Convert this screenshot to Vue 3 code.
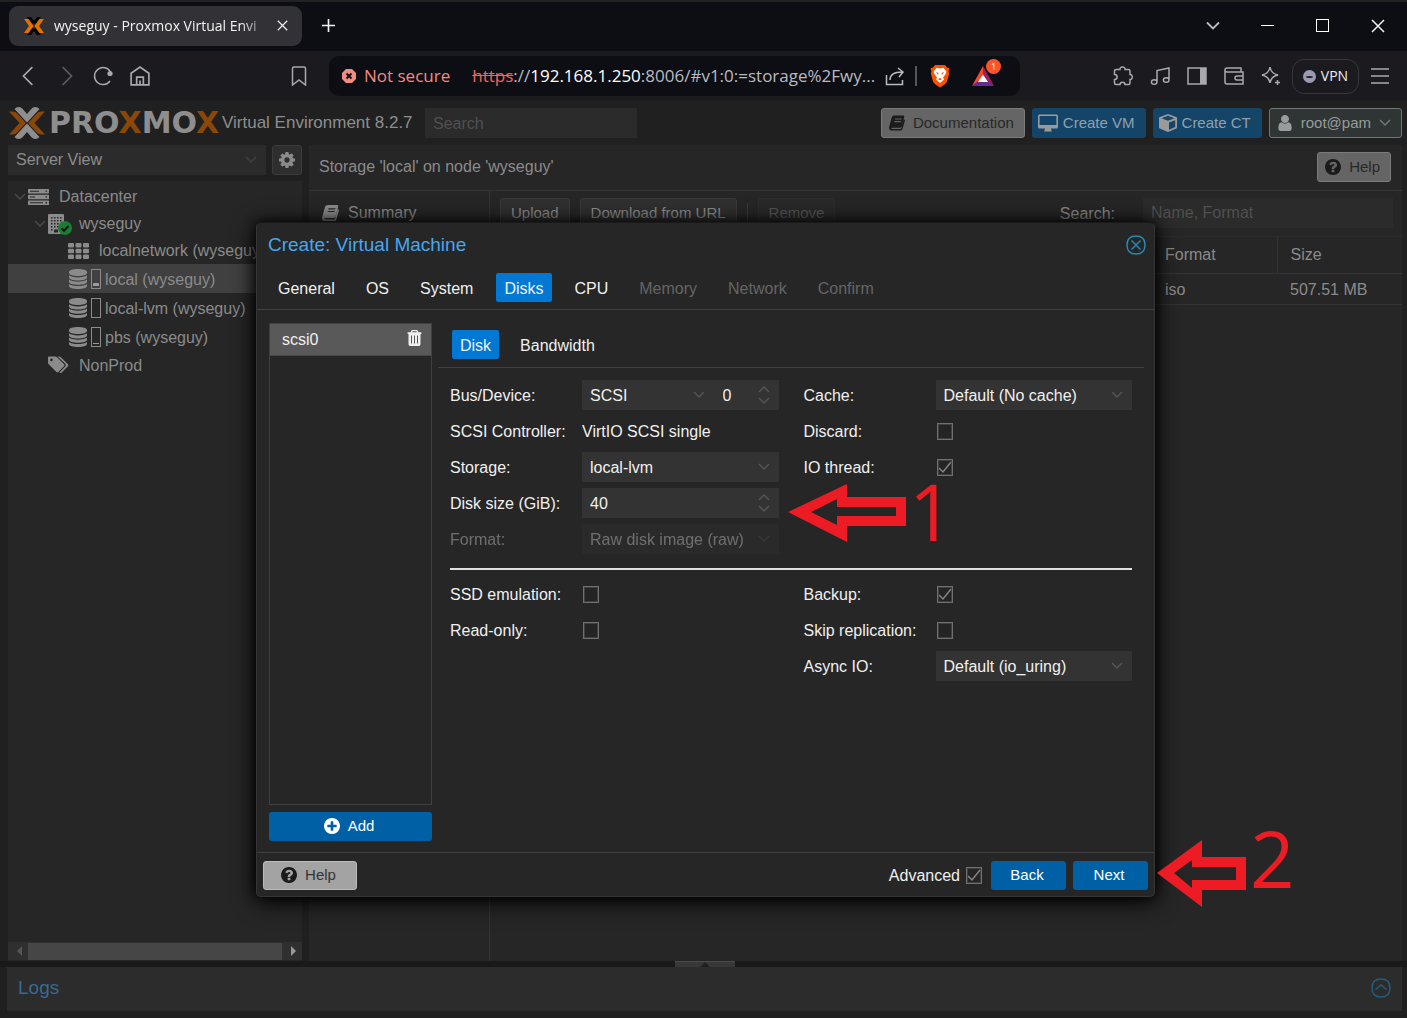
<script setup>
import { h, ref } from 'vue'

const glyphs = {
  question: { box: '128 128 1536 1536', d: 'M1024 1376v-192q0-14-9-23t-23-9h-192q-14 0-23 9t-9 23v192q0 14 9 23t23 9h192q14 0 23-9t9-23zm256-672q0-88-55.5-163t-138.5-116-170-41q-243 0-371 213-15 24 8 42l132 100q7 6 19 6 16 0 25-12 53-68 86-92 34-24 86-24 48 0 85.5 26t37.5 59q0 38-20 61t-68 45q-63 28-115.5 86.5t-52.5 125.5v36q0 14 9 23t23 9h192q14 0 23-9t9-23q0-19 21.5-49.5t54.5-49.5q32-18 49-28.5t46-35 44.5-48 28-60.5 12.5-81zm384 192q0 209-103 385.5t-279.5 279.5-385.5 103-385.5-103-279.5-279.5-103-385.5 103-385.5 279.5-279.5 385.5-103 385.5 103 279.5 279.5 103 385.5z' },
  plus: { box: '128 128 1536 1536', d: 'M1344 960v-128q0-26-19-45t-45-19h-256v-256q0-26-19-45t-45-19h-128q-26 0-45 19t-19 45v256h-256q-26 0-45 19t-19 45v128q0 26 19 45t45 19h256v256q0 26 19 45t45 19h128q26 0 45-19t19-45v-256h256q26 0 45-19t19-45zm320-64q0 209-103 385.5t-279.5 279.5-385.5 103-385.5-103-279.5-279.5-103-385.5 103-385.5 279.5-279.5 385.5-103 385.5 103 279.5 279.5 103 385.5z' },
  cog: { box: '128 128 1536 1536', d: 'M1152 896q0-106-75-181t-181-75-181 75-75 181 75 181 181 75 181-75 75-181zm512-109v222q0 12-8 23t-20 13l-185 28q-19 54-39 91 35 50 107 138 10 12 10 25t-9 23q-27 37-99 108t-94 71q-12 0-26-9l-138-108q-44 23-91 38-16 136-29 186-7 28-36 28h-222q-14 0-24.5-8.5t-11.5-21.5l-28-184q-49-16-90-37l-141 107q-10 9-25 9-14 0-25-11-126-114-165-168-7-10-7-23 0-12 8-23 15-21 51-66.5t54-70.5q-27-50-41-99l-183-27q-13-2-21-12.5t-8-23.5v-222q0-12 8-23t19-13l186-28q14-46 39-92-40-57-107-138-10-12-10-24 0-10 9-23 26-36 98.5-107.5t94.5-71.5q13 0 26 10l138 107q44-23 91-38 16-136 29-186 7-28 36-28h222q14 0 24.5 8.5t11.5 21.5l28 184q49 16 90 37l142-107q9-9 24-9 13 0 25 10 129 119 165 170 7 8 7 22 0 12-8 23-15 21-51 66.5t-54 70.5q26 50 41 98l183 28q13 2 21 12.5t8 23.5z' },
  user: { box: '256 128 1280 1536', d: 'M1536 1399q0 109-62.5 187t-150.5 78h-854q-88 0-150.5-78t-62.5-187q0-85 8.5-160.5t31.5-152 58.5-131 94-89 134.5-34.5q131 128 313 128t313-128q76 0 134.5 34.5t94 89 58.5 131 31.5 152 8.5 160.5zm-256-887q0 159-112.5 271.5t-271.5 112.5-271.5-112.5-112.5-271.5 112.5-271.5 271.5-112.5 271.5 112.5 112.5 271.5z' },
  desktop: { box: '0 0 20 17', d: 'M1.500 0h17q1.500 0 1.500 1.500v11q0 1.500-1.500 1.500h-5.500q0 1 .8 2.200.2.800-.6.800h-6.400q-.8 0-.6-.8.8-1.200.8-2.200h-5.500q-1.500 0-1.500-1.500v-11q0-1.500 1.500-1.500zM1.600 1.600v8.800h16.800v-8.800z' },
  cube: { box: '0 0 18 18', d: 'M9 0l8.200 3q.8.300.8 1.100v9.200q0 .8-.7 1.200l-7.600 3.300q-.7.300-1.400 0l-7.600-3.300q-.7-.4-.7-1.200v-9.200q0-.8.800-1.100zM9 1.800l-6.500 2.400 6.500 2.500 6.500-2.500zM10 15.800l6.200-2.800v-6.800l-6.200 2.400z' },
  book: { box: '0 0 17 16', d: 'M5.500 0h9.500q1.600 0 1.200 1.700l-2.700 9.800q-.5 1.500-2 1.500h-8.500q-.7 0-.6.7.1.700 1 .7h8.600q.8 0 1-.7l2.800-9.800.7.600q.6.500.3 1.500l-2.500 8.500q-.5 1.500-2 1.500h-9.400q-2.700 0-2.900-2.700 0-1 .4-1.900l2.400-9q.5-2.300 2.700-2.400zM6.500 3.200l-.3 1.200h7l.4-1.200zM5.800 5.900l-.3 1.200h7l.3-1.200z' },
  server: { box: '0 0 21 16', d: 'M.6 0h19.800q.6 0 .6.600v3.200q0 .6-.6.600h-19.800q-.6 0-.6-.6v-3.200q0-.6.600-.6zM2 1.700v1h9v-1zM17.500 1.500v1.300h1.500v-1.300zM.6 5.800h19.800q.6 0 .6.600v3.200q0 .6-.6.600h-19.800q-.6 0-.6-.6v-3.200q0-.6.600-.6zM2 7.500v1h5v-1zM17.500 7.300v1.300h1.500v-1.300zM.6 11.600h19.800q.6 0 .6.600v3.200q0 .6-.6.600h-19.800q-.6 0-.6-.6v-3.200q0-.6.600-.6zM2 13.300v1h13v-1zM17.500 13.100v1.300h1.500v-1.300z' },
  grid: { box: '0 0 21 16', d: 'M1 0h4q1 0 1 1v2.500q0 1-1 1h-4q-1 0-1-1v-2.500q0-1 1-1zM8.500 0h4q1 0 1 1v2.500q0 1-1 1h-4q-1 0-1-1v-2.500q0-1 1-1zM16 0h4q1 0 1 1v2.500q0 1-1 1h-4q-1 0-1-1v-2.500q0-1 1-1zM1 5.800h4q1 0 1 1v2.500q0 1-1 1h-4q-1 0-1-1v-2.500q0-1 1-1zM8.500 5.800h4q1 0 1 1v2.500q0 1-1 1h-4q-1 0-1-1v-2.500q0-1 1-1zM16 5.800h4q1 0 1 1v2.500q0 1-1 1h-4q-1 0-1-1v-2.500q0-1 1-1zM1 11.500h4q1 0 1 1v2.500q0 1-1 1h-4q-1 0-1-1v-2.500q0-1 1-1zM8.500 11.500h4q1 0 1 1v2.500q0 1-1 1h-4q-1 0-1-1v-2.500q0-1 1-1zM16 11.500h4q1 0 1 1v2.500q0 1-1 1h-4q-1 0-1-1v-2.500q0-1 1-1z' },
  database: { box: '0 0 18 20', d: 'M9 0c5 0 9 1.300 9 2.900v1.200c0 1.700-4 3-9 3s-9-1.300-9-3v-1.200c0-1.600 4-2.900 9-2.900zM0 6.300c1.800 1.400 5.200 2.100 9 2.100s7.200-.7 9-2.100v2.200c0 1.700-4 3-9 3s-9-1.300-9-3zM0 10.600c1.800 1.400 5.200 2.100 9 2.100s7.200-.7 9-2.100v2.200c0 1.700-4 3-9 3s-9-1.300-9-3zM0 14.900c1.800 1.400 5.200 2.100 9 2.100s7.200-.7 9-2.100v2.100c0 1.700-4 3-9 3s-9-1.300-9-3z' },
  building: { box: '0 0 16 20', d: 'M1 0h14q1 0 1 1v18q0 1-1 1h-14q-1 0-1-1v-18q0-1 1-1zM3 3v1.500h1.500v-1.500zM6 3v1.500h1.500v-1.500zM9 3v1.500h1.500v-1.500zM12 3v1.500h1.500v-1.500zM3 6v1.500h1.500v-1.500zM6 6v1.500h1.500v-1.500zM9 6v1.500h1.500v-1.500zM12 6v1.500h1.500v-1.500zM3 9v1.500h1.500v-1.500zM6 9v1.500h1.500v-1.500zM9 9v1.500h1.500v-1.500zM12 9v1.500h1.500v-1.500zM3 12v1.500h1.500v-1.500zM6 12v1.500h1.500v-1.500zM9 12v1.500h1.500v-1.500zM3 15v1.500h1.500v-1.500zM6 15.500v3h4v-3z' },
  tags: { box: '0 0 22 18', d: 'M1 0h6.500q1 0 1.700.7l7.600 7.600q.9 1 0 2l-6 6q-1 .9-2 0l-7.800-7.700q-1-.8-1-2v-5.600q0-1 1-1zM3.600 2.200a1.400 1.400 0 1 0 .1 0zM10 0h1.500q1 0 1.700.7l7.700 7.600q1 1 0 2l-6.500 6.600q-1.400 1-2.400-.1l6-6.200q1.400-1.400 0-2.800z' },
  trash: { box: '0 0 14 16', d: 'M5 0h4q1 0 1.400 1l.5 1.200h2.600q.5 0 .5.500v.8q0 .4-.5.400h-.5v10.100q0 2-1.600 2h-8.800q-1.600 0-1.600-2v-10.100h-.5q-.5 0-.5-.4v-.8q0-.5.500-.5h2.600l.5-1.200q.4-1 1.400-1zM5.100 1.300l-.4.900h4.600l-.4-.9zM3.500 5.500v8h1v-8zM6.500 5.500v8h1v-8zM9.500 5.500v8h1v-8z' },
  chevron: { box: '0 0 12 8', line: 1, d: 'M1 1l5 5 5-5' },
  spin: { box: '0 0 12 20', line: 1, d: 'M1 7l5-5 5 5M1 13l5 5 5-5' },
  back: { box: '0 0 18 18', line: 1, d: 'M12 1L4 9l8 8' },
  forward: { box: '0 0 18 18', line: 1, d: 'M6 1l8 8-8 8' },
  home: { box: '0 0 18 18', line: 1, d: 'M1 6.500L9 1l8 5.500V17H1zM6 17v-7h6v7M9 13v4' },
  bookmark: { box: '0 0 18 20', line: 1, d: 'M4 1h10q1.500 0 1.500 1.500V19L9 14l-6.500 5V2.500Q2.500 1 4 1z' },
  share: { box: '0 0 20 20', line: 1, d: 'M1.500 9v9.500h16V14M5 14c0-6 4-8 12-8M13 2l5 4-4 5' },
  puzzle: { box: '0 0 20 20', line: 1, d: 'M3 3.500h4c-.5-3.500 5.500-3.500 5 0h3.500q1.500 0 1.500 1.500v3.500c3-.5 3 5.500 0 5v3.500q0 1.500-1.500 1.500H12c0-3-5-3-5 0H3q-1.500 0-1.500-1.500V13.500c3.500 0 3.500-5 0-5V5q0-1.500 1.500-1.500z' },
  music: { box: '0 0 20 20', line: 1, d: 'M7 16V4.500L19 2v12M7 16a2.800 2.300 0 1 1-5.600 0 2.800 2.300 0 1 1 5.600 0zM19 14a2.800 2.300 0 1 1-5.600 0 2.800 2.300 0 1 1 5.600 0z' },
  wallet: { box: '0 0 20 20', line: 1, d: 'M17 6V2H3Q1 2 1 4t2 2h16v12H3q-2 0-2-2V4M19 10h-6q-2 0-2 2t2 2h6' },
  sparkle: { box: '0 0 20 20', line: 1, d: 'M9 1q1 6.500 8 8-7 1.500-8 8-1-6.500-8-8 7-1.500 8-8zM16.500 14v5M14 16.500h5' },
  menu: { box: '0 0 20 20', line: 1, d: 'M1 3h18M1 10h18M1 17h18' },
  down: { box: '0 0 14 10', line: 2, d: 'M1 1.500l6 6 6-6' },
  close: { box: '0 0 14 14', line: 1, d: 'M1 1l12 12M13 1L1 13' },
  add: { box: '0 0 14 14', line: 2, d: 'M7 0v14M0 7h14' },
  roundClose: { box: '0 0 20 20', line: 1, d: 'M10 1q9 0 9 9t-9 9-9-9 9-9zM5.500 5.500l9 9M14.500 5.500l-9 9' },
  roundUp: { box: '0 0 20 20', line: 1, d: 'M10 1q9 0 9 9t-9 9-9-9 9-9zM4.500 11.500L10 7l5.500 4.500' }
}

const Icon = ({ name }) => {
  const g = glyphs[name]
  const paint = g.line
    ? { fill: 'none', stroke: 'currentColor', 'stroke-width': g.line === 1 ? 1.5 : 1.8 }
    : { fill: 'currentColor', 'fill-rule': 'evenodd' }
  return h('svg', { viewBox: g.box, 'aria-hidden': 'true' }, [h('path', { d: g.d, ...paint })])
}
Icon.props = ['name']

const extensions = ['puzzle', 'music', 'panel', 'wallet', 'sparkle']

const tree = [
  { label: 'Datacenter', icon: 'server', depth: 0, open: true },
  { label: 'wyseguy', icon: 'building', depth: 1, open: true, online: true },
  { label: 'localnetwork (wyseguy)', icon: 'grid', depth: 2 },
  { label: 'local (wyseguy)', icon: 'database', depth: 2, usage: 3, active: true },
  { label: 'local-lvm (wyseguy)', icon: 'database', depth: 2, usage: 0 },
  { label: 'pbs (wyseguy)', icon: 'database', depth: 2, usage: 1 },
  { label: 'NonProd', icon: 'tags', depth: 1 }
]

const steps = [
  { label: 'General' }, { label: 'OS' }, { label: 'System' }, { label: 'Disks', active: true }, { label: 'CPU' },
  { label: 'Memory', off: true }, { label: 'Network', off: true }, { label: 'Confirm', off: true }
]

const basic = [
  [
    { id: 'bus', label: 'Bus/Device:', kind: 'bus' },
    { id: 'controller', label: 'SCSI Controller:', kind: 'text', value: 'VirtIO SCSI single' },
    { id: 'storage', label: 'Storage:', kind: 'select', value: 'local-lvm' },
    { id: 'size', label: 'Disk size (GiB):', kind: 'number', value: 40 },
    { id: 'format', label: 'Format:', kind: 'select', value: 'Raw disk image (raw)', off: true }
  ],
  [
    { id: 'cache', label: 'Cache:', kind: 'select', value: 'Default (No cache)' },
    { id: 'discard', label: 'Discard:', kind: 'check' },
    { id: 'iothread', label: 'IO thread:', kind: 'check', value: true }
  ]
]
const extra = [
  [
    { id: 'ssd', label: 'SSD emulation:', kind: 'check' },
    { id: 'readonly', label: 'Read-only:', kind: 'check' }
  ],
  [
    { id: 'backup', label: 'Backup:', kind: 'check', value: true },
    { id: 'replication', label: 'Skip replication:', kind: 'check' },
    { id: 'asyncio', label: 'Async IO:', kind: 'select', value: 'Default (io_uring)' }
  ]
]
const sections = [basic, extra]
const advanced = ref(true)
</script>

<template>
  <div class="window">
    <header class="tabstrip">
      <div class="tab">
        <svg class="favicon" viewBox="0 0 20 18" aria-hidden="true">
          <path d="M3 0h4l3 4 3-4h4l-5 6.500H8zM3 18h4l3-4 3 4h4l-5-6.500H8z" fill="#000" />
          <path d="M0 2h4.500l5 7-5 7H0l5-7zM20 2h-4.500l-5 7 5 7H20l-5-7z" fill="#e57000" />
        </svg>
        <span class="tab-title">wyseguy - Proxmox Virtual Envi</span>
        <button class="plain tab-close" aria-label="Close tab"><Icon name="close" /></button>
      </div>
      <button class="plain new-tab" aria-label="New tab"><Icon name="add" /></button>
      <div class="window-controls">
        <button class="plain grey" aria-label="Search tabs"><Icon name="down" /></button>
        <button class="plain" aria-label="Minimize"><span class="minimize"></span></button>
        <button class="plain" aria-label="Maximize"><span class="maximize"></span></button>
        <button class="plain" aria-label="Close window"><Icon name="close" /></button>
      </div>
    </header>

    <nav class="toolbar">
      <div class="nav-left">
        <button class="plain" aria-label="Back"><Icon name="back" /></button>
        <button class="plain faint" aria-label="Forward"><Icon name="forward" /></button>
        <button class="plain" aria-label="Reload">
          <svg viewBox="0 0 20 20" aria-hidden="true">
            <path d="M17 15A8.500 8.500 0 1 1 17.500 6" fill="none" stroke="currentColor" stroke-width="1.500" />
            <circle cx="17" cy="7.500" r="2.600" fill="currentColor" />
          </svg>
        </button>
        <button class="plain" aria-label="Home"><Icon name="home" /></button>
        <button class="plain bookmark" aria-label="Bookmark"><Icon name="bookmark" /></button>
      </div>
      <div class="urlbar">
        <svg class="insecure" viewBox="0 0 14 14" aria-hidden="true">
          <path d="M4 0h6l4 4v6l-4 4H4l-4-4V4z" fill="#f28b82" />
          <path d="M4.500 4.500l5 5M9.500 4.500l-5 5" stroke="#0d0e13" stroke-width="1.800" />
        </svg>
        <span class="warn">Not secure</span>
        <span class="url"><s>https</s>://<b>192.168.1.250</b>:8006/#v1:0:=storage%2Fwy...</span>
        <button class="plain share" aria-label="Share"><Icon name="share" /></button>
        <span class="bar"></span>
        <svg class="shield" viewBox="0 0 20 24" aria-hidden="true">
          <path d="M5 1h10l2 2.500 2.500.8-1 3.200.7 2-2.200 8Q16 20 10 23.500 4 20 3 17.500l-2.200-8 .7-2-1-3.200L3 3.500z" fill="#ff5000" />
          <path d="M10 4.500l3.500-.8 3 4-1 2.500-2.500 3.300 1 2-4 3.500-4-3.500 1-2L4.500 10.200l-1-2.500 3-4z" fill="#fff" />
          <path d="M6 8l2.500 1-.5 2zM14 8l-2.500 1 .5 2zM8 15l2-1 2 1-2 1.500z" fill="#ff5000" />
        </svg>
        <span class="rewards">
          <svg viewBox="0 0 22 20" aria-hidden="true">
            <path d="M11 0L0 20l11-8z" fill="#ff4724" />
            <path d="M11 0l11 20-11-8z" fill="#9e1f63" />
            <path d="M0 20h22l-11-9z" fill="#662d91" />
            <path d="M11 8.500l5 7.500H6z" fill="#fff" />
          </svg>
          <span class="badge">1</span>
        </span>
      </div>
      <div class="nav-right">
        <button v-for="name in extensions" :key="name" class="plain" :aria-label="name">
          <svg v-if="name === 'panel'" viewBox="0 0 20 20" aria-hidden="true">
            <rect x="1" y="2" width="18" height="16" fill="none" stroke="currentColor" stroke-width="1.500" />
            <rect x="13" y="2" width="6" height="16" fill="currentColor" />
          </svg>
          <Icon v-else :name="name" />
        </button>
        <button class="vpn"><span class="vpn-dot"></span>VPN</button>
        <button class="plain" aria-label="Menu"><Icon name="menu" /></button>
      </div>
    </nav>

    <main class="app">
      <header class="app-header">
        <div class="logo">
          <svg class="logo-mark" viewBox="0 0 36 32" aria-hidden="true">
            <path d="M5.500 2Q7 0 10 0q2 0 3.500 1.800L18 7l4.500-5.200Q24 0 26 0q3 0 4.500 2L18 15.500zM5.500 30Q7 32 10 32q2 0 3.500-1.800L18 25l4.500 5.200Q24 32 26 32q3 0 4.500-2L18 16.500z" fill="#8e8e8e" />
            <path d="M0 4.500h4q2.500 0 4 1.700L17 16l-9 9.800q-1.500 1.700-4 1.700H0L10.500 16zM36 4.500h-4q-2.500 0-4 1.700L19 16l9 9.800q1.500 1.700 4 1.700h4L25.500 16z" fill="#8a4708" />
          </svg>
          <span class="wordmark">PRO<i>X</i>MO<i>X</i></span>
        </div>
        <span class="version">Virtual Environment 8.2.7</span>
        <input class="field global-search" type="text" placeholder="Search" aria-label="Search" />
        <div class="header-buttons">
          <button class="btn light"><Icon name="book" />Documentation</button>
          <button class="btn blue"><Icon name="desktop" class="wide" />Create VM</button>
          <button class="btn blue"><Icon name="cube" class="medium" />Create CT</button>
          <button class="btn account"><Icon name="user" />root@pam<Icon name="chevron" class="caret" /></button>
        </div>
      </header>

      <div class="workspace">
        <aside class="sidebar">
          <div class="view-row">
            <div class="combo">
              <select aria-label="View"><option>Server View</option></select>
              <Icon name="chevron" class="caret" />
            </div>
            <button class="gear" aria-label="Settings"><Icon name="cog" /></button>
          </div>
          <div class="tree-panel">
            <ul class="tree">
              <li v-for="node in tree" :key="node.label" :class="['depth-' + node.depth, node.icon, { active: node.active }]">
                <span class="twist"><Icon v-if="node.open" name="chevron" /></span>
                <span class="node-icon">
                  <Icon :name="node.icon" />
                  <svg v-if="node.online" class="online" viewBox="0 0 14 14" aria-hidden="true">
                    <circle cx="7" cy="7" r="7" fill="#1c7c31" />
                    <path d="M3.500 7.200l2.500 2.500 4.500-4.700" fill="none" stroke="#151515" stroke-width="2" />
                  </svg>
                </span>
                <span v-if="node.usage !== undefined" class="gauge"><span :style="{ height: node.usage + 'px' }"></span></span>
                <span class="node-label">{{ node.label }}</span>
              </li>
            </ul>
            <div class="scrollbar"><span class="arrow-left"></span><span class="thumb"></span><span class="arrow-right"></span></div>
          </div>
        </aside>

        <section class="content">
          <header class="content-header">
            <h1>Storage 'local' on node 'wyseguy'</h1>
            <button class="btn light"><Icon name="question" />Help</button>
          </header>
          <div class="content-body">
            <nav class="side-nav"><a href="#"><Icon name="book" />Summary</a></nav>
            <div class="grid-area">
              <div class="grid-toolbar">
                <button class="btn dark">Upload</button>
                <button class="btn dark">Download from URL</button>
                <span class="separator"></span>
                <button class="btn dark" disabled>Remove</button>
                <label for="filter">Search:</label>
                <input id="filter" class="field" type="text" placeholder="Name, Format" />
              </div>
              <table>
                <thead><tr><th class="name"></th><th class="format">Format</th><th class="size">Size</th></tr></thead>
                <tbody><tr><td></td><td>iso</td><td>507.51 MB</td></tr></tbody>
              </table>
            </div>
          </div>
        </section>
      </div>

      <div class="splitter"><span class="grip"></span></div>
      <footer class="logs"><h2>Logs</h2><button class="plain" aria-label="Expand logs"><Icon name="roundUp" /></button></footer>

      <div class="overlay">
        <form class="dialog" role="dialog" aria-labelledby="dialog-title" @submit.prevent>
          <header class="dialog-header">
            <h2 id="dialog-title">Create: Virtual Machine</h2>
            <button type="button" class="plain" aria-label="Close"><Icon name="roundClose" /></button>
          </header>
          <nav class="steps">
            <button v-for="s in steps" :key="s.label" type="button" class="step" :class="{ active: s.active }" :disabled="s.off">{{ s.label }}</button>
          </nav>
          <div class="dialog-body">
            <div class="disk-column">
              <ul class="disk-list">
                <li>scsi0<button type="button" class="plain" aria-label="Remove scsi0"><Icon name="trash" /></button></li>
              </ul>
              <button type="button" class="btn primary"><Icon name="plus" />Add</button>
            </div>
            <div class="disk-detail">
              <nav class="detail-tabs">
                <button type="button" class="step active">Disk</button>
                <button type="button" class="step">Bandwidth</button>
              </nav>
              <div v-for="(section, n) in sections" :key="n" class="section">
                <div v-for="(column, c) in section" :key="c" class="column">
                  <div v-for="f in column" :key="f.id" class="row" :class="{ off: f.off }">
                    <label :for="f.id">{{ f.label }}</label>
                    <input v-if="f.kind === 'check'" :id="f.id" type="checkbox" :checked="f.value" />
                    <output v-else-if="f.kind === 'text'" :id="f.id">{{ f.value }}</output>
                    <div v-else-if="f.kind === 'select'" class="combo">
                      <select :id="f.id" :disabled="f.off"><option>{{ f.value }}</option></select>
                      <Icon name="chevron" class="caret" />
                    </div>
                    <div v-else-if="f.kind === 'number'" class="combo">
                      <input :id="f.id" type="number" :value="f.value" />
                      <Icon name="spin" class="spinner" />
                    </div>
                    <div v-else class="bus">
                      <div class="combo">
                        <select :id="f.id"><option>SCSI</option></select>
                        <Icon name="chevron" class="caret" />
                      </div>
                      <div class="combo unit">
                        <input type="number" value="0" aria-label="Device number" />
                        <Icon name="spin" class="spinner" />
                      </div>
                    </div>
                  </div>
                </div>
              </div>
            </div>
          </div>
          <footer class="dialog-footer">
            <button type="button" class="btn light help"><Icon name="question" />Help</button>
            <label for="advanced">Advanced</label>
            <input id="advanced" v-model="advanced" type="checkbox" />
            <button type="button" class="btn primary">Back</button>
            <button type="submit" class="btn primary">Next</button>
          </footer>

          <div class="callout first">
            <svg width="118" height="58" viewBox="0 0 118 58" aria-hidden="true">
              <path d="M0 28L59 0v13h59v29H59v16zM23 28l26 13v-9h59v-9H49v-8z" fill="#ed1c24" fill-rule="evenodd" />
            </svg>
            <span>1</span>
          </div>
          <div class="callout second">
            <svg width="90" height="67" viewBox="0 0 90 67" aria-hidden="true">
              <path d="M0 33L45 0v17h44v33H45v17zM17 33l18 15v-8h44V27H35v-7z" fill="#ed1c24" fill-rule="evenodd" />
            </svg>
            <span>2</span>
          </div>
        </form>
      </div>
    </main>
  </div>
</template>

<style>
body {
  margin: 0;
  background: #202020;
}
</style>

<style scoped>
* { box-sizing: border-box; }
.window {
  display: flex;
  flex-direction: column;
  min-height: 100vh;
  font: 16px/20px "Liberation Sans", Arial, sans-serif;
  color: #8b8b8b;
  background: #202020;
}
button, input, select { font: inherit; color: inherit; }
svg { display: block; flex: none; }
h1, h2, ul { margin: 0; padding: 0; font-weight: 400; list-style: none; }
h1 { font-size: 16px; }
h2 { font-size: 19px; }
.plain {
  display: flex;
  align-items: center;
  justify-content: center;
  padding: 0;
  border: 0;
  background: none;
}

/* browser chrome */
.tabstrip, .toolbar { font-family: "Open Sans", "Noto Sans", sans-serif; }
.tabstrip {
  display: flex;
  align-items: center;
  height: 51px;
  padding: 0 2px 2px 9px;
  border-top: 2px solid #222;
  background: #0d0e13;
  color: #f2f2f2;
}
.tab {
  display: flex;
  align-items: center;
  gap: 10px;
  width: 293px;
  height: 40px;
  padding: 0 14px 0 15px;
  border-radius: 9px;
  background: #323136;
}
.favicon { width: 20px; height: 18px; }
.tab-title {
  flex: 1;
  font-size: 14px;
  white-space: nowrap;
  mask-image: linear-gradient(90deg, #000 88%, #0003);
}
.tab-close { width: 12px; height: 12px; }
.tab-close svg { width: 11px; }
.new-tab { width: 52px; height: 40px; }
.new-tab svg { width: 13px; }
.window-controls { display: flex; margin-left: auto; }
.window-controls .plain { width: 55px; height: 40px; }
.window-controls svg { width: 14px; }
.grey { color: #bbb; }
.minimize { width: 13px; height: 1px; background: #fff; }
.maximize { width: 13px; height: 13px; border: 1px solid #fff; }

.toolbar {
  display: flex;
  align-items: center;
  height: 50px;
  background: #1b1b1f;
  color: #a9a9ad;
}
.nav-left { display: flex; gap: 17px; width: 329px; padding: 0 20px 0 19px; }
.nav-left .plain, .nav-left svg { width: 20px; height: 20px; }
.faint { opacity: 0.45; }
.bookmark { margin-left: auto; }
.urlbar {
  display: flex;
  flex: 1;
  align-items: center;
  min-width: 0;
  height: 40px;
  padding: 0 26px 0 13px;
  border-radius: 10px;
  background: #0d0e13;
  color: #b9bbc0;
  font-size: 17px;
}
.insecure { width: 14px; height: 14px; margin-right: 8px; }
.warn { flex: none; margin-right: 22px; color: #f28b82; }
.url { flex: 1; white-space: nowrap; }
.url b { font-weight: 400; color: #fff; }
.url s { color: #ee675c; }
.share svg { width: 20px; }
.bar { width: 2px; height: 20px; margin: 0 13px 0 10px; background: #55565b; }
.shield { width: 20px; height: 24px; }
.rewards { position: relative; margin-left: 22px; }
.rewards svg { width: 22px; height: 20px; }
.badge {
  position: absolute;
  top: -7px;
  right: -7px;
  width: 15px;
  height: 15px;
  border-radius: 50%;
  background: #fb542b;
  color: #fff;
  font-size: 9px;
  line-height: 15px;
  text-align: center;
}
.nav-right {
  display: flex;
  align-items: center;
  justify-content: flex-end;
  gap: 17px;
  width: 387px;
  padding-right: 17px;
}
.nav-right > .plain, .nav-right > .plain svg { width: 20px; height: 20px; }
.vpn {
  display: flex;
  align-items: center;
  justify-content: center;
  gap: 5px;
  width: 67px;
  height: 35px;
  margin: 0 -6px;
  padding: 0;
  border: 1px solid #36363b;
  border-radius: 12px;
  background: none;
  color: #ececf0;
  font-size: 14px;
}
.vpn-dot {
  width: 13px;
  height: 13px;
  border: solid #9a9bb3;
  border-width: 6px 3px 5px;
  border-radius: 50%;
  background: #22222a;
}

/* shared controls */
.btn {
  display: inline-flex;
  align-items: center;
  justify-content: center;
  gap: 8px;
  height: 30px;
  padding: 0 10px 0 7px;
  border: 1px solid transparent;
  border-radius: 3px;
  font-size: 15px;
  white-space: nowrap;
}
.btn svg { width: 16px; height: 16px; }
.btn .wide { width: 20px; height: 18px; }
.btn .medium { width: 18px; height: 18px; }
.light { border-color: #7b7b7b; background: #656565; color: #282828; }
.light svg { color: #1b1b1b; }
.blue { gap: 5px; padding: 0 10px 0 5px; background: #144468; color: #8fa1ae; }
.blue svg { color: #9a9a9a; }
.account { border-color: #6f7877; background: #2f3434; color: #989c9c; }
.dark { padding: 0 10px; border-color: #3a3a3a; background: #303030; color: #8b8b8b; }
.dark:disabled { border-color: #2d2d2d; background: #292929; color: #555; }
.primary { border: 0; background: #0060a6; color: #fff; }
.btn .caret { width: 12px; height: 8px; color: #707575; }
.field {
  height: 30px;
  padding: 1px 8px 0;
  border: 0;
  background: #2b2b2b;
  color: #8b8b8b;
}
.field::placeholder { color: #505050; opacity: 1; }
.combo {
  display: grid;
  flex: 1;
  align-items: center;
  min-width: 0;
  height: 30px;
  background: #333;
}
.combo > * { grid-area: 1 / 1; }
.combo select, .combo input {
  width: 100%;
  height: 30px;
  padding: 2px 34px 0 8px;
  border: 0;
  outline: 0;
  appearance: none;
  background: none;
}
.combo input[type="number"] { appearance: textfield; }
.combo .caret { justify-self: end; width: 12px; height: 8px; margin-right: 9px; color: #555; pointer-events: none; }
.combo .spinner { justify-self: end; width: 12px; height: 20px; margin-right: 9px; color: #555; pointer-events: none; }
input[type="checkbox"] {
  width: 16px;
  height: 17px;
  margin: 0 0 0 1px;
  border: 1px solid #707070;
  outline: 1px solid #404040;
  outline-offset: -2px;
  appearance: none;
  background: #242424;
}
input[type="checkbox"]:checked {
  background-image: url("data:image/svg+xml,%3Csvg xmlns='http://www.w3.org/2000/svg' viewBox='0 0 14 15'%3E%3Cpath d='M1 8l4 4 8-10' fill='none' stroke='%23858585' stroke-width='1.500'/%3E%3C/svg%3E");
}

/* application */
.app { position: relative; display: flex; flex: 1; flex-direction: column; padding-bottom: 7px; }
.app-header { display: flex; align-items: center; height: 44px; padding: 0 5px 0 9px; }
.logo { display: flex; align-items: center; gap: 4px; width: 213px; }
.logo-mark { width: 36px; height: 32px; }
.wordmark { color: #8e8e8e; font: bold 30px/32px "DejaVu Sans", sans-serif; }
.wordmark i { color: #8a4708; font-style: normal; }
.version { width: 203px; color: #8e8e8e; font-size: 17px; white-space: nowrap; }
.global-search { width: 212px; }
.header-buttons { display: flex; gap: 7px; margin-left: auto; }
.workspace { display: flex; flex: 1; gap: 7px; padding: 0 5px 0 8px; }
.sidebar { display: flex; flex-direction: column; gap: 6px; width: 294px; }
.view-row { display: flex; gap: 6px; }
.view-row .combo { background: #2b2b2b; }
.view-row select { padding-top: 0; }
.view-row .caret { color: #404040; }
.gear {
  display: grid;
  place-items: center;
  width: 30px;
  height: 30px;
  padding: 0;
  border: 1px solid #3b3b3b;
  border-radius: 3px;
  background: #2e2e2e;
}
.gear svg { width: 16px; height: 16px; }
.tree-panel { display: flex; flex: 1; flex-direction: column; background: #262626; }
.tree { flex: 1; padding-top: 2px; }
.tree li { display: flex; align-items: center; height: 27px; padding-left: 6px; white-space: nowrap; overflow: hidden; }
.tree li.depth-1 { padding-left: 26px; }
.tree li.depth-2 { padding-left: 46px; }
.tree li.database { height: 29px; }
.tree li.active { background: #404040; }
.twist { width: 14px; color: #4a4a4a; }
.twist svg { width: 12px; height: 8px; }
.node-icon { position: relative; width: 21px; margin-right: 10px; }
.node-icon svg { width: 21px; height: 16px; }
.database .node-icon { width: 18px; margin: 0 4px 0 1px; }
.database .node-icon svg { width: 18px; height: 20px; }
.database .node-label { padding-top: 3px; }
.building .node-icon > svg { width: 16px; height: 20px; }
.node-icon .online.online { position: absolute; right: -3px; bottom: -1px; width: 14px; height: 14px; }
.tags .node-icon svg { height: 18px; }
.tags .node-label { padding-top: 2px; }
.gauge {
  display: flex;
  align-items: flex-end;
  width: 10px;
  height: 20px;
  margin-right: 4px;
  padding: 2px 1px;
  border: 1px solid #8b8b8b;
}
.gauge span { width: 100%; background: #9a9a9a; }
.scrollbar { display: flex; align-items: center; gap: 6px; height: 18px; margin-bottom: 1px; padding: 0 6px 0 8px; background: #2f2f2f; }
.thumb { flex: 1; height: 17px; background: #464646; }
.arrow-left, .arrow-right { border: 5px solid transparent; }
.arrow-left { border-right-color: #555; border-left-width: 0; margin-left: 1px; }
.arrow-right { border-left-color: #999; border-right-width: 0; margin-left: 3px; }

.content { display: flex; flex: 1; flex-direction: column; min-width: 0; background: #262626; }
.content-header {
  display: flex;
  align-items: center;
  justify-content: space-between;
  height: 46px;
  padding: 0 11px 1px 10px;
  border-bottom: 1px solid #333;
}
.content-body { display: flex; flex: 1; }
.side-nav { width: 181px; padding: 12px 13px; border-right: 1px solid #333; }
.side-nav a { display: flex; align-items: center; gap: 9px; color: inherit; text-decoration: none; }
.side-nav svg { width: 17px; height: 16px; }
.grid-area { flex: 1; min-width: 0; }
.grid-toolbar { display: flex; align-items: center; gap: 10px; height: 46px; padding: 0 9px 2px 10px; border-bottom: 1px solid #2d2d2d; }
.grid-toolbar label { margin-left: auto; margin-right: 18px; padding-top: 2px; }
.grid-toolbar .field { width: 250px; }
.separator { width: 1px; height: 20px; background: #3a3a3a; }
table { width: 100%; border-collapse: collapse; table-layout: fixed; }
th, td { height: 30px; padding: 0 8px; border-bottom: 1px solid #333; font-weight: 400; text-align: left; }
th { height: 36px; }
td { height: 31px; padding-top: 2px; }
.format { width: 120px; border-right: 1px solid #333; }
.size { width: 125px; }
.size, td:last-child { padding-left: 13px; }
.splitter { height: 6px; padding-left: 3px; background: #191919; }
.grip {
  display: block;
  width: 60px;
  height: 6px;
  margin: 0 auto;
  border-top: 1px solid #4a4a4a;
  background: #383838;
}
.grip::after { content: ""; display: block; width: 0; margin: 0 auto; border: 5px solid transparent; border-top: 0; border-bottom-color: #202020; }
.logs {
  display: flex;
  align-items: center;
  justify-content: space-between;
  height: 44px;
  margin: 0 5px 0 7px;
  padding: 0 11px 2px;
  background: #2c2c2c;
  color: #366a93;
}
.logs .plain { color: #215f7c; }
.logs svg { width: 20px; height: 20px; }

/* wizard */
.overlay {
  position: absolute;
  inset: 0;
  display: flex;
  align-items: center;
  justify-content: center;
  padding-left: 4px;
}
.dialog {
  position: relative;
  width: 899px;
  border: 1px solid #353535;
  border-top-color: #1a1a1a;
  border-radius: 5px;
  background: #262626;
  box-shadow: 0 4px 24px #000, 0 0 12px #000c;
  color: #f0f0f0;
}
.dialog-header { display: flex; align-items: center; justify-content: space-between; height: 46px; padding: 0 8px 2px 11px; color: #45a7f0; }
.dialog-header .plain { color: #2588b0; }
.dialog-header svg { width: 20px; height: 20px; }
.steps { display: flex; gap: 15px; height: 41px; padding: 4px 13px 0; border-bottom: 1px solid #404040; }
.step { height: 29px; padding: 2px 8px 0; border: 0; border-radius: 2px; background: none; }
.step.active { background: #0078d4; }
.step:disabled { color: #656565; }
.dialog-body { display: flex; gap: 6px; min-height: 542px; padding: 13px 10px 11px 12px; }
.disk-column { display: flex; flex-direction: column; gap: 7px; width: 163px; }
.disk-list { flex: 1; border: 1px solid #404040; }
.disk-list li {
  display: flex;
  align-items: center;
  justify-content: space-between;
  height: 32px;
  padding: 1px 9px 0 12px;
  border-bottom: 1px solid #484848;
  background: #595959;
}
.disk-list .plain { padding-bottom: 4px; }
.disk-list svg { width: 15px; height: 16px; }
.disk-column .btn { height: 29px; padding-bottom: 1px; }
.disk-detail { flex: 1; }
.detail-tabs { display: flex; gap: 13px; height: 45px; padding: 7px 14px 0; border-bottom: 1px solid #404040; }
.section { display: flex; gap: 25px; padding: 12px 12px 0; }
.section + .section { margin: 14px 12px 0; padding: 9px 0 0; border-top: 2px solid #e0e0e0; }
.column { display: flex; flex: 1; flex-direction: column; gap: 6px; }
.row { display: flex; align-items: center; height: 30px; }
.row label, .row output { padding-top: 2px; white-space: nowrap; }
.row label { width: 132px; }
.row.off { opacity: 0.35; }
.row.off select { color: #f0f0f0; opacity: 1; }
.bus { display: flex; flex: 1; }
.bus .unit { flex: 0 0 64px; }
.bus .caret { margin-right: 10px; }
.unit input { padding-right: 24px; }
.dialog-footer {
  display: flex;
  align-items: center;
  gap: 7px;
  height: 44px;
  padding: 1px 6px 0;
  border-top: 1px solid #404040;
}
.dialog-footer .btn { width: 75px; height: 29px; }
.dialog-footer label { margin-left: auto; padding-top: 2px; }
.dialog-footer input { margin: 1px 2px 0 -1px; }
.dialog-footer .help { width: 94px; border-color: #bbb; background: #a3a3a3; color: #333; }

.callout {
  position: absolute;
  display: flex;
  gap: 3px;
  color: #ed1c24;
  font: 78px/54px "Open Sans", "Noto Sans", sans-serif;
  pointer-events: none;
}
.first { top: 261px; left: 531px; }
.second { top: 617px; left: 900px; line-height: 36px; }
</style>
